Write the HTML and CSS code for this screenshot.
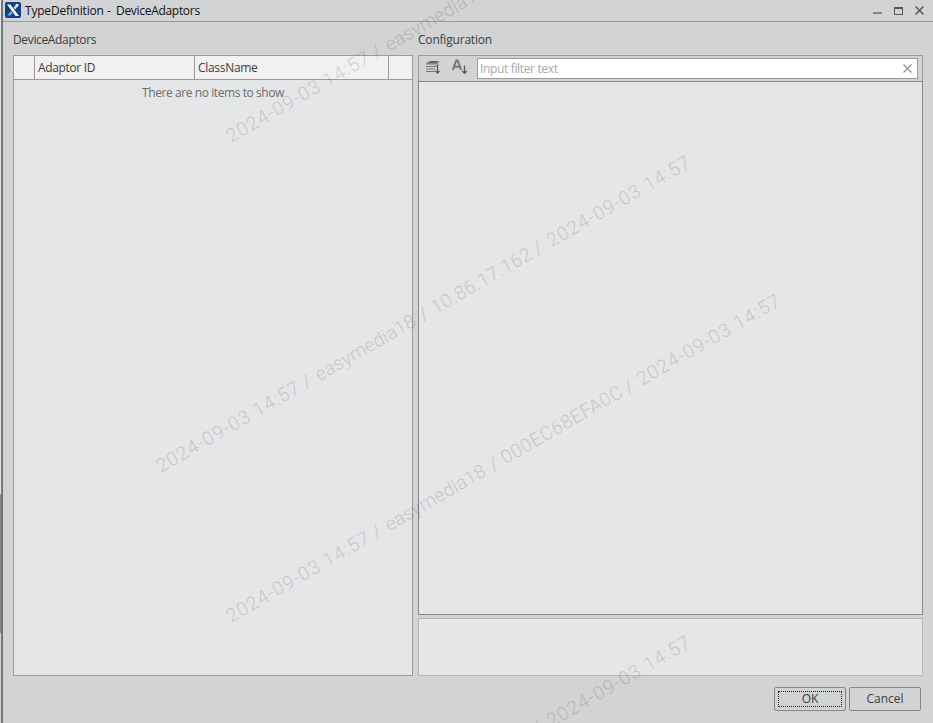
FILE: index.html
```html
<!DOCTYPE html>
<html lang="en">
<head>
  <meta charset="UTF-8">
  <title>TypeDefinition - DeviceAdaptors</title>
  <link rel="stylesheet" href="styles.css">
</head>

<body>

  <!-- Edge of the window behind the dialog -->
  <div class="backdrop"></div>

  <div class="dialog">

    <!-- Title bar -->
    <header class="titlebar">
      <svg class="app-icon" width="16" height="16" viewBox="0 0 16 16">
        <rect width="16" height="16" rx="2" fill="#163f82"/>
        <path d="M2 2.5h3.400l8.600 11.500h-3.400z" fill="#fff"/>
        <path d="M2.200 13.500l3.700-4.700 1.700 2.200-2 2.500z" fill="#43b6e8"/>
        <path d="M8.500 5.800l2-2.600 1.800 1.600-2.100 2.800z" fill="#c9e4f4"/>
        <circle cx="12" cy="3.200" r="1.500" fill="#e8f5fb"/>
      </svg>
      <h1><span class="t-type">TypeDefinition</span><span class="t-dash">-</span><span class="t-name">DeviceAdaptors</span></h1>
      <div class="window-buttons">
        <svg width="9" height="9" viewBox="0 0 9 9"><path d="M0 7h9" stroke="#85878a" stroke-width="2"/></svg>
        <svg width="9" height="8" viewBox="0 0 9 8" shape-rendering="crispEdges"><path d="M0 0h9v8H0zM1 2v5h7V2z" fill="#55575a" fill-rule="evenodd"/></svg>
        <svg width="9" height="9" viewBox="0 0 9 9"><path d="M.5.5l8 8M8.500.5l-8 8" stroke="#55575a" stroke-width="1.500"/></svg>
      </div>
    </header>

    <main class="content">

      <!-- Adaptor list -->
      <section class="adaptors">
        <h2 class="tight">DeviceAdaptors</h2>
        <div class="grid">
          <div class="grid-header">
            <div></div>
            <div><span class="col-id">Adaptor ID</span></div>
            <div><span class="col-class">ClassName</span></div>
            <div></div>
          </div>
          <p class="empty">There are no items to show</p>
        </div>
      </section>

      <!-- Property editor -->
      <section class="configuration">
        <h2>Configuration</h2>
        <div class="toolbar">
          <svg class="tool" width="16" height="16" viewBox="0 0 16 16">
            <path d="M1 4.500l4-2.500h9l-3.500 2.500z" fill="#65676a"/>
            <path d="M1 5h9.500l3.500-2M1 7.500h9.500l3-2M1 10h9M1 12.500h9" fill="none" stroke="#737578" stroke-width="1.200"/>
            <path d="M12.500 6v8M10.500 11.800l2 2.200 2-2.200" fill="none" stroke="#55575a" stroke-width="1.200"/>
          </svg>
          <svg class="tool" width="16" height="16" viewBox="0 0 16 16">
            <path d="M1.800 11L5.300 1.500h1.400L10.200 11M3.200 7.800h5.600" fill="none" stroke="#737578" stroke-width="2"/>
            <path d="M13.500 6.500v8M11.300 12l2.200 2.300 2.200-2.300" fill="none" stroke="#55575a" stroke-width="1.300"/>
          </svg>
          <div class="filter">
            <span>Input filter text</span>
            <svg width="9" height="9" viewBox="0 0 9 9"><path d="M.5.5l8 8M8.500.5l-8 8" stroke="#8e9093" stroke-width="1.200"/></svg>
          </div>
        </div>
        <div class="properties"></div>
        <div class="description"></div>
      </section>

    </main>

    <footer class="actions">
      <button class="btn btn-default">OK</button>
      <button class="btn">Cancel</button>
    </footer>
  </div>

  <!-- Diagonal watermark, repeated every 480px -->
  <svg class="watermark" width="933" height="723">
    <defs>
      <g id="mark-mac">
        <text x="0" textLength="162">2024-09-03 14:57</text>
        <text x="168">/</text>
        <text x="183" textLength="113">easymedia18</text>
        <text x="303">/</text>
        <text x="317" textLength="137">000EC68EFA0C</text>
        <text x="459">/</text>
        <text x="474" textLength="162">2024-09-03 14:57</text>
      </g>
      <g id="mark-ip">
        <text x="0" textLength="162">2024-09-03 14:57</text>
        <text x="168">/</text>
        <text x="183" textLength="113">easymedia18</text>
        <text x="303">/</text>
        <text x="317" textLength="113">10.86.17.162</text>
        <text x="435">/</text>
        <text x="451" textLength="162">2024-09-03 14:57</text>
      </g>
    </defs>
    <use href="#mark-mac" transform="translate(231 143) rotate(-30)"/>
    <use href="#mark-ip" transform="translate(161 473) rotate(-30)"/>
    <use href="#mark-mac" transform="translate(231 623) rotate(-30)"/>
    <use href="#mark-ip" transform="translate(161 953) rotate(-30)"/>
  </svg>

</body>
</html>
```
FILE: styles.css
```css
/* Base styling */
* {
  box-sizing: border-box;
}

body {
  margin: 0;
  height: 723px;
  display: flex;
  overflow: hidden;
  background-color: #d1d3d4;
  color: #3c3d40;
  font-family: "Open Sans", "Noto Sans", sans-serif;
  font-size: 12px;
  line-height: 16px;
}

h1, h2, p {
  margin: 0;
  font-size: 12px;
  font-weight: normal;
}

svg {
  display: block;
}

/* Strip on the left edge */
.backdrop {
  width: 3px;
  border-right: 2px solid #737679;
  background: linear-gradient(#e6e7e8 494px, #8b8d90 494px, #8b8d90 633px, #cfd1d2 633px);
}

.dialog {
  flex: 1;
  display: flex;
  flex-direction: column;
}

/* Title bar */
.titlebar {
  height: 22px;
  padding: 0 9px 0 2px;
  display: flex;
  align-items: center;
  border-bottom: 1px solid #999b9e;
  color: #111;
}

.app-icon {
  margin-right: 4px;
  margin-top: -2px;
}

.titlebar h1 {
  display: flex;
}

.t-type {
  width: 82px;
  letter-spacing: -0.2px;
}

.t-dash {
  width: 9px;
}

.t-name {
  letter-spacing: -0.3px;
}

.window-buttons {
  margin-left: auto;
  display: flex;
  align-items: center;
  gap: 12px;
}

/* Two panes */
.content {
  height: 654px;
  padding: 10px 10px 0;
  display: flex;
  gap: 5px;
}

.adaptors, .configuration {
  display: flex;
  flex-direction: column;
}

.adaptors {
  width: 400px;
}

.configuration {
  flex: 1;
}

h2 {
  height: 23px;
  letter-spacing: -0.2px;
}

h2.tight {
  letter-spacing: -0.35px;
}

.grid {
  flex: 1;
  border: 1px solid #999b9e;
  background-color: #e5e6e8;
}

.grid-header {
  height: 24px;
  display: grid;
  grid-template-columns: 21px 160px 194px 1fr;
  background-color: #f1f1f1;
  border-bottom: 1px solid #999b9e;
}

.grid-header div {
  padding: 4px 3px;
  border-right: 1px solid #999b9e;
}

.grid-header div:last-child {
  border-right: none;
}

.col-id {
  letter-spacing: -0.35px;
}

.col-class {
  letter-spacing: -0.3px;
}

.empty {
  padding-top: 5px;
  text-align: center;
  letter-spacing: -0.42px;
  color: #6b6c70;
}

/* Property editor */
.toolbar {
  height: 26px;
  padding: 2px 4px 0 6px;
  display: flex;
  border: 1px solid #999b9e;
  border-bottom: none;
}

.tool {
  margin: 1px 10px 0 0;
}

.filter {
  flex: 1;
  height: 21px;
  padding: 0 5px 0 2px;
  display: flex;
  align-items: center;
  justify-content: space-between;
  border: 1px solid #999b9e;
  background-color: #fff;
  color: #a6a7aa;
  letter-spacing: -0.35px;
}

.properties {
  flex: 1;
  border: 1px solid #85878a;
  background-color: #e5e6e8;
}

.description {
  height: 58px;
  margin-top: 3px;
  border: 1px solid #b5b7b9;
  background-color: #e5e6e8;
}

/* Bottom buttons */
.actions {
  padding: 11px 12px 0;
  display: flex;
  justify-content: flex-end;
  gap: 3px;
}

.btn {
  width: 72px;
  height: 24px;
  padding: 0;
  border: 1px solid #85878a;
  border-radius: 2px;
  background-color: #d1d3d4;
  color: #3c3d40;
  font: inherit;
}

.btn-default {
  outline: 1px dotted #222;
  outline-offset: -5px;
}

/* Watermark over the whole window */
.watermark {
  position: absolute;
  top: 0;
  left: 0;
  pointer-events: none;
  fill: #000;
  opacity: 0.14;
  font-family: "Roboto", sans-serif;
  font-size: 19px;
  font-weight: 300;
}
```
